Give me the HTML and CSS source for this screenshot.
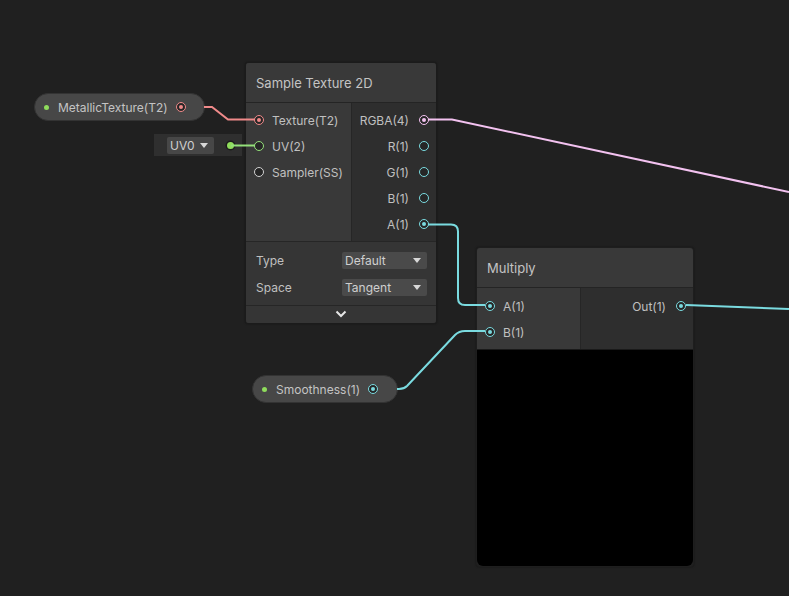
FILE: index.html
```html
<!DOCTYPE html>
<html>
<head>
<meta charset="utf-8">
<link rel="stylesheet" href="styles.css">
</head>
<body>
<div class="canvas">
  <div class="pill pill-metal">
    <span class="dot"></span>
    <span class="pill-label">MetallicTexture(T2)</span>
    <span class="port port-red on"></span>
  </div>

  <div class="uvbox">
    <div class="uvdrop">UV0 <span class="tri"></span></div>
    <span class="uvdot"></span>
  </div>

  <div class="node node-tex">
    <div class="header">Sample Texture 2D</div>
    <div class="ports">
      <div class="inputs">
        <div class="row"><span class="port port-red on"></span><span>Texture(T2)</span></div>
        <div class="row"><span class="port port-green"></span><span>UV(2)</span></div>
        <div class="row"><span class="port port-white"></span><span>Sampler(SS)</span></div>
      </div>
      <div class="outputs">
        <div class="row"><span>RGBA(4)</span><span class="port port-pink on"></span></div>
        <div class="row"><span>R(1)</span><span class="port port-cyan"></span></div>
        <div class="row"><span>G(1)</span><span class="port port-cyan"></span></div>
        <div class="row"><span>B(1)</span><span class="port port-cyan"></span></div>
        <div class="row"><span>A(1)</span><span class="port port-cyan on"></span></div>
      </div>
    </div>
    <div class="settings">
      <div class="setting"><span>Type</span><div class="drop">Default<span class="tri"></span></div></div>
      <div class="setting"><span>Space</span><div class="drop">Tangent<span class="tri"></span></div></div>
    </div>
    <div class="collapse">
      <svg width="12" height="8" viewBox="0 0 12 8"><path d="M1.5,1.5 L6,6 L10.5,1.5" fill="none" stroke="#e6e6e6" stroke-width="2"/></svg>
    </div>
  </div>

  <div class="node node-mul">
    <div class="header">Multiply</div>
    <div class="ports">
      <div class="inputs mul-in">
        <div class="row"><span class="port port-cyan on"></span><span>A(1)</span></div>
        <div class="row"><span class="port port-cyan on"></span><span>B(1)</span></div>
      </div>
      <div class="outputs mul-out">
        <div class="row"><span>Out(1)</span><span class="port port-cyan on"></span></div>
      </div>
    </div>
    <div class="preview"></div>
  </div>

  <div class="pill pill-smooth">
    <span class="dot"></span>
    <span class="pill-label">Smoothness(1)</span>
    <span class="port port-cyan on"></span>
  </div>

  <svg class="edges" width="789" height="596" viewBox="0 0 789 596">
    <path d="M204,107 H212 L228,119.5 H255" stroke="#f08a8a" />
    <path d="M231,145.5 H255" stroke="#94e07a" />
    <path d="M428,119.5 H452 L789,192" stroke="#f3c2f0" />
    <path d="M428,224.5 H451 Q458,224.5 458,231.5 V298 Q458,305 465,305 H485" stroke="#7adbe0" />
    <path d="M397,389 H399 Q404,389 407,386 L455,335 Q459,331 465,331 H485" stroke="#7adbe0" />
    <path d="M686,305 L789,309" stroke="#7adbe0" />
  </svg>
</div>
</body>
</html>
```

FILE: styles.css
```css
* { box-sizing: border-box; }
html, body { margin: 0; padding: 0; }
body {
  background: #202020;
  font-family: Inter, "Noto Sans", sans-serif;
  font-size: 12px;
  color: #c0c0c0;
}
.canvas {
  position: relative;
  width: 789px;
  height: 596px;
  overflow: hidden;
}
.edges {
  position: absolute;
  left: 0;
  top: 0;
  pointer-events: none;
}
.edges path {
  fill: none;
  stroke-width: 2;
}

/* ports */
.port {
  width: 10px;
  height: 10px;
  border-radius: 50%;
  border: 1px solid currentColor;
  background: #262626;
  flex: none;
  position: relative;
}
.port.on::after {
  content: "";
  position: absolute;
  left: 2px;
  top: 2px;
  width: 4px;
  height: 4px;
  border-radius: 50%;
  background: currentColor;
}
.port-red { color: #f08a8a; }
.port-green { color: #94e07a; }
.port-white { color: #d2d2d2; }
.port-pink { color: #f3c2f0; }
.port-cyan { color: #7adbe0; }

/* pills */
.pill {
  position: absolute;
  height: 28px;
  border-radius: 14px;
  background: #474747;
  display: flex;
  align-items: center;
  border: 1px solid #333;
}
.pill .dot {
  width: 5px;
  height: 5px;
  border-radius: 50%;
  background: #8fdc5c;
  margin-left: 9px;
  flex: none;
}
.pill-label {
  margin-left: 9px;
  color: #c4c4c4;
}
.pill .port {
  margin-left: 8px;
}
.pill-metal { left: 34px; top: 93px; width: 171px; }
.pill-smooth { left: 252px; top: 375px; width: 146px; }

/* UV box */
.uvbox {
  position: absolute;
  left: 154px;
  top: 134px;
  width: 88px;
  height: 22px;
  background: #2f2f2f;
  display: flex;
  align-items: center;
  padding-left: 13px;
}
.uvdrop {
  height: 17px;
  width: 47px;
  background: #474747;
  border-radius: 2px;
  display: flex;
  align-items: center;
  padding-left: 3px;
  gap: 5px;
  color: #cfcfcf;
}
.uvdot {
  margin-left: 13px;
  width: 7px;
  height: 7px;
  border-radius: 50%;
  background: #8fdc5c;
  box-shadow: 0 0 0 1.5px #1c1c1c;
}
.tri {
  width: 0;
  height: 0;
  border-left: 4.5px solid transparent;
  border-right: 4.5px solid transparent;
  border-top: 5px solid #d8d8d8;
}

/* nodes */
.node {
  position: absolute;
  background: #2d2d2d;
  border: 1px solid #1b1b1b;
  border-radius: 3px;
  display: flex;
  flex-direction: column;
  box-shadow: 0 0 2px rgba(0,0,0,0.4);
}
.header {
  height: 40px;
  flex: none;
  background: #393939;
  border-bottom: 1px solid #242424;
  display: flex;
  align-items: center;
  padding-left: 10px;
  font-size: 13px;
  color: #c4c4c4;
  border-radius: 3px 3px 0 0;
}
.ports {
  display: flex;
  flex: none;
}
.inputs {
  background: #393939;
  border-right: 1px solid #262626;
  padding-top: 4px;
}
.outputs {
  flex: 1;
  background: #2e2e2e;
  padding-top: 4px;
}
.row {
  height: 26px;
  display: flex;
  align-items: center;
}
.inputs .row { padding-left: 8px; gap: 8px; }
.outputs .row { justify-content: flex-end; padding-right: 7px; gap: 10px; }

.node-tex { left: 245px; top: 62px; width: 192px; height: 262px; }
.node-tex .inputs { width: 106px; height: 138px; }
.node-tex .outputs { height: 138px; }
.settings {
  background: #353535;
  border-top: 1px solid #262626;
  border-bottom: 1px solid #262626;
  padding: 10px 9px 9px 10px;
  display: flex;
  flex-direction: column;
  gap: 10px;
}
.setting {
  display: flex;
  align-items: center;
  justify-content: space-between;
  height: 17px;
}
.drop {
  width: 85px;
  height: 17px;
  background: #4a4a4a;
  border-radius: 2px;
  display: flex;
  align-items: center;
  justify-content: space-between;
  padding: 0 6px 0 3px;
  color: #cfcfcf;
}
.collapse {
  flex: 1;
  background: #353535;
  display: flex;
  align-items: center;
  justify-content: center;
  padding-bottom: 1px;
  border-radius: 0 0 3px 3px;
}

.node-mul { left: 476px; top: 247px; width: 218px; height: 320px; background: #202020; border-color: #1e1e1e; }
.mul-in { width: 104px; height: 61px; padding-top: 5px; }
.mul-out { height: 61px; padding-top: 5px; }
.preview {
  flex: 1;
  background: #000;
  border-top: 1px solid #1a1a1a;
  border-radius: 0 0 6px 6px;
}
```
